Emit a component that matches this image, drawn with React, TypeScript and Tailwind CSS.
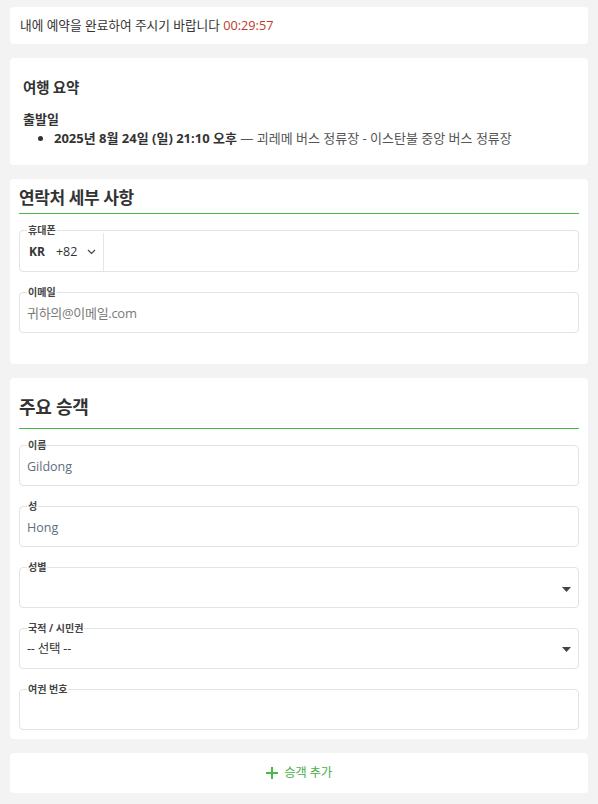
import React from "react";

const font = {
  fontFamily: '"Open Sans", "Noto Sans CJK KR", sans-serif',
};

const Card = ({
  className = "",
  children,
}: {
  className?: string;
  children: React.ReactNode;
}) => (
  <section className={`rounded-[4px] bg-white ${className}`}>{children}</section>
);

const Field = ({
  label,
  children,
}: {
  label: string;
  children: React.ReactNode;
}) => (
  <fieldset className="rounded-[4px] border border-[#e3e3e3] px-[7px] pb-[5px]">
    <legend className="ml-0 px-[1px] text-[10px] font-bold leading-[12px] text-[#444]">
      {label}
    </legend>
    {children}
  </fieldset>
);

const SelectArrow = () => (
  <svg width="9" height="5" viewBox="0 0 9 5" aria-hidden>
    <path d="M0 0h9L4.5 5z" fill="#444" />
  </svg>
);

const GreenRule = () => <div className="h-px bg-[#45b845]" />;

export default function App() {
  return (
    <div
      style={font}
      className="min-h-[804px] bg-[#f3f3f3] px-[10px] pt-[7px] pb-[11px] text-[#333]"
    >
      <div className="flex flex-col gap-[14px]">
        <Card className="flex h-[37px] items-center px-[10px]">
          <p className="pt-[1px] text-[12.7px]">
            내에 예약을 완료하여 주시기 바랍니다{" "}
            <span className="text-[#c0392b]">00:29:57</span>
          </p>
        </Card>

        <Card className="h-[107px] px-[13px] pt-[20px]">
          <h2 className="text-[14.5px] font-bold leading-[20px] tracking-[-0.2px]">
            여행 요약
          </h2>
          <h3 className="mt-[12px] text-[13px] font-bold leading-[19px]">
            출발일
          </h3>
          <ul className="list-disc pl-[31px] text-[13px] leading-[19px]">
            <li>
              <span className="font-bold">2025년 8월 24일 (일) 21:10 오후</span>{" "}
              <span className="text-[#555]">
                — 괴레메 버스 정류장 - 이스탄불 중앙 버스 정류장
              </span>
            </li>
          </ul>
        </Card>

        <Card className="px-[9px] pb-[31px]">
          <h2 className="pt-[7px] pb-[3px] text-[17px] font-bold leading-[24px] tracking-[-0.4px]">
            연락처 세부 사항
          </h2>
          <GreenRule />
          <div className="mt-[10px] flex flex-col gap-[14px]">
            <fieldset className="rounded-[4px] border border-[#e3e3e3] pl-0 pr-[7px]">
              <legend className="ml-[7px] px-[1px] text-[10px] font-bold leading-[12px] text-[#444]">
                휴대폰
              </legend>
              <div className="-mt-[4px] flex h-[39px] items-center pt-[1px]">
                <div className="flex h-full w-[84px] items-center border-r border-[#e6e6e6] pl-[9px]">
                  <span className="text-[12px] font-bold">KR</span>
                  <span className="ml-[11px] text-[12.5px]">+82</span>
                  <svg
                    className="ml-[10px]"
                    width="9"
                    height="6"
                    viewBox="0 0 9 6"
                    aria-hidden
                  >
                    <path
                      d="M1 1l3.5 3.5L8 1"
                      fill="none"
                      stroke="#444"
                      strokeWidth="1.2"
                    />
                  </svg>
                </div>
                <div className="flex-1" />
              </div>
            </fieldset>

            <Field label="이메일">
              <div className="flex h-[29px] items-center pt-[2px] text-[13px] tracking-[-0.3px] text-[#7a7a7a]">
                귀하의@이메일.com
              </div>
            </Field>
          </div>
        </Card>

        <Card className="px-[9px] pb-[9px]">
          <h2 className="pt-[15px] pb-[7px] text-[18px] font-bold leading-[28px] tracking-[-0.3px]">
            주요 승객
          </h2>
          <GreenRule />
          <div className="mt-[10px] flex flex-col gap-[14px]">
            <Field label="이름">
              <div className="flex h-[29px] items-center pt-[4px] text-[12.5px] text-[#5f6e80]">
                Gildong
              </div>
            </Field>
            <Field label="성">
              <div className="flex h-[29px] items-center pt-[4px] text-[12.5px] text-[#5f6e80]">
                Hong
              </div>
            </Field>
            <Field label="성별">
              <div className="flex h-[29px] items-center justify-end pt-[4px]">
                <SelectArrow />
              </div>
            </Field>
            <Field label="국적 / 시민권">
              <div className="flex h-[29px] items-center justify-between pt-[2px]">
                <span className="text-[12.5px] tracking-[-0.2px] text-[#333]">
                  -- 선택 --
                </span>
                <SelectArrow />
              </div>
            </Field>
            <Field label="여권 번호">
              <div className="h-[29px]" />
            </Field>
          </div>
        </Card>

        <Card className="flex h-[40px] items-center justify-center">
          <button
            type="button"
            className="flex items-center gap-[6px] text-[12.5px] text-[#4cae4c]"
          >
            <svg width="12" height="12" viewBox="0 0 12 12" aria-hidden>
              <path d="M6 0v12M0 6h12" stroke="#4cb84c" strokeWidth="2" />
            </svg>
            <span className="tracking-[-0.3px]">승객 추가</span>
          </button>
        </Card>
      </div>
    </div>
  );
}
